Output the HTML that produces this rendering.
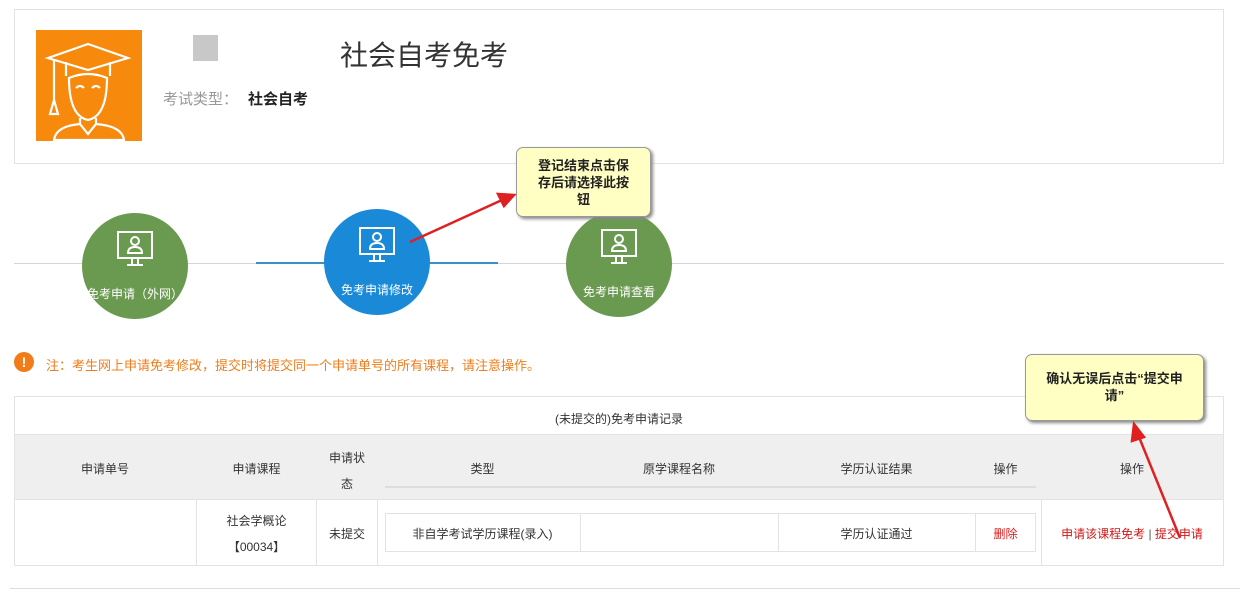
<!DOCTYPE html>
<html><head><meta charset="utf-8"><style>
*{margin:0;padding:0;box-sizing:border-box}
body{width:1245px;height:599px;background:#fff;position:relative;overflow:hidden;font-family:"Liberation Sans","Noto Sans CJK SC",sans-serif;color:#333}
.a{position:absolute}
.c{text-align:center}
.circ{position:absolute;width:106px;height:106px;border-radius:50%;color:#fff;font-size:12px;text-align:center}
.circ svg{position:absolute;left:33px;top:16px}
.circ span{position:absolute;left:-10px;right:-10px;top:72px;white-space:nowrap}
.tip{position:absolute;background:#ffffc4;border:1px solid #999;border-radius:7px;box-shadow:2px 2px 3px #888;font-size:13px;font-weight:bold;color:#222;text-align:center;line-height:17px;z-index:5}
.hd{font-size:12px;color:#333}
</style></head><body>
<div class="a" style="left:14px;top:9px;width:1210px;height:155px;border:1px solid #e3e3e3"></div>
<div class="a" style="left:36px;top:30px;width:106px;height:111px;background:#f78a0c">
<svg width="106" height="111" viewBox="0 0 106 111" fill="none" stroke="#fff" stroke-width="2.2">
<path d="M12 28 L52 14 L92 28 L52 40 Z"/><path d="M30 32 V46 M74 32 V46"/><path d="M18 30 V70 L14 84 H22 L18 70"/>
<path d="M33 48 Q33 86 52 90 Q71 86 71 48 Q52 40 33 48Z"/><path d="M40 58 q4 -4 8 0 M56 58 q4 -4 8 0"/>
<path d="M44 88 V94 L52 104 L60 94 V88"/><path d="M44 94 Q20 96 18 110 H88 Q86 96 60 94"/>
</svg></div>
<div class="a" style="left:193px;top:35px;width:25px;height:26px;background:#c8c8c8"></div>
<div class="a" style="left:340px;top:34px;font-size:28px;color:#333">社会自考免考</div>
<div class="a" style="left:163px;top:88px;font-size:15px;color:#999">考试类型：</div>
<div class="a" style="left:248px;top:88px;font-size:15px;font-weight:bold;color:#222">社会自考</div>

<div class="a" style="left:14px;top:263px;width:1210px;height:1px;background:#d5d5d5"></div>
<div class="a" style="left:256px;top:262px;width:242px;height:2px;background:#3a8fc8"></div>
<div class="circ" style="left:82px;top:213px;background:#6a9a50"><svg width="40" height="40" viewBox="0 0 40 40" fill="none" stroke="#fff" stroke-width="2"><rect x="3" y="3" width="34" height="26"/><circle cx="20" cy="12" r="4"/><path d="M13 24 q0-6 7-6 q7 0 7 6 z"/><path d="M17 29 V35 M23 29 V35 M12 36 H28"/></svg><span>免考申请（外网）</span></div>
<div class="circ" style="left:324px;top:209px;background:#1a8ad8"><svg width="40" height="40" viewBox="0 0 40 40" fill="none" stroke="#fff" stroke-width="2"><rect x="3" y="3" width="34" height="26"/><circle cx="20" cy="12" r="4"/><path d="M13 24 q0-6 7-6 q7 0 7 6 z"/><path d="M17 29 V35 M23 29 V35 M12 36 H28"/></svg><span>免考申请修改</span></div>
<div class="circ" style="left:566px;top:211px;background:#6a9a50"><svg width="40" height="40" viewBox="0 0 40 40" fill="none" stroke="#fff" stroke-width="2"><rect x="3" y="3" width="34" height="26"/><circle cx="20" cy="12" r="4"/><path d="M13 24 q0-6 7-6 q7 0 7 6 z"/><path d="M17 29 V35 M23 29 V35 M12 36 H28"/></svg><span>免考申请查看</span></div>

<div class="tip" style="left:516px;top:147px;width:135px;height:70px;padding-top:9px">登记结束点击保<br>存后请选择此按<br>钮</div>

<div class="a" style="left:14px;top:352px;width:20px;height:20px;border-radius:50%;background:#f07d1a;color:#fff;font-weight:bold;font-size:14px;text-align:center;line-height:20px">!</div>
<div class="a" style="left:46px;top:355px;font-size:13px;color:#f07d1a">注：考生网上申请免考修改，提交时将提交同一个申请单号的所有课程，请注意操作。</div>

<div class="a" style="left:14px;top:396px;width:1210px;height:170px;border:1px solid #e3e3e3"></div>
<div class="a hd c" style="left:14px;top:410px;width:1210px">(未提交的)免考申请记录</div>
<div class="a" style="left:15px;top:434px;width:1208px;height:66px;background:#efefef;border-top:1px solid #e3e3e3;border-bottom:1px solid #e3e3e3"></div>
<div class="a hd c" style="left:14px;top:460px;width:182px">申请单号</div>
<div class="a hd c" style="left:196px;top:460px;width:121px">申请课程</div>
<div class="a hd c" style="left:317px;top:445px;width:60px;line-height:26px">申请状<br>态</div>
<div class="a hd c" style="left:385px;top:460px;width:195px">类型</div>
<div class="a hd c" style="left:580px;top:460px;width:198px">原学课程名称</div>
<div class="a hd c" style="left:778px;top:460px;width:197px">学历认证结果</div>
<div class="a hd c" style="left:975px;top:460px;width:61px">操作</div>
<div class="a hd c" style="left:1041px;top:460px;width:182px">操作</div>
<div class="a" style="left:385px;top:486px;width:651px;height:2px;background:#ddd"></div>
<div class="a" style="left:196px;top:500px;width:1px;height:65px;background:#e3e3e3"></div>
<div class="a" style="left:316px;top:500px;width:1px;height:65px;background:#e3e3e3"></div>
<div class="a" style="left:377px;top:500px;width:1px;height:65px;background:#e3e3e3"></div>
<div class="a" style="left:1041px;top:500px;width:1px;height:65px;background:#e3e3e3"></div>
<div class="a hd c" style="left:196px;top:508px;width:121px;line-height:26px">社会学概论<br>【00034】</div>
<div class="a hd c" style="left:317px;top:525px;width:60px">未提交</div>
<div class="a" style="left:385px;top:513px;width:651px;height:39px;border:1px solid #e3e3e3"></div>
<div class="a" style="left:580px;top:513px;width:1px;height:39px;background:#e3e3e3"></div>
<div class="a" style="left:778px;top:513px;width:1px;height:39px;background:#e3e3e3"></div>
<div class="a" style="left:975px;top:513px;width:1px;height:39px;background:#e3e3e3"></div>
<div class="a hd c" style="left:385px;top:525px;width:195px">非自学考试学历课程(录入)</div>
<div class="a hd c" style="left:778px;top:525px;width:197px">学历认证通过</div>
<div class="a c" style="left:975px;top:525px;width:61px;font-size:12px;color:#e02020">删除</div>
<div class="a c" style="left:1041px;top:525px;width:182px;font-size:12px;color:#d01818">申请该课程免考 <span style="color:#555">|</span> 提交申请</div>

<div class="tip" style="left:1025px;top:354px;width:179px;height:67px;padding-top:15px">确认无误后点击“提交申<br>请”</div>
<svg class="a" style="left:0;top:0;z-index:10" width="1245" height="599"><g stroke="#e02020" stroke-width="2.5" fill="#e02020"><line x1="410" y1="242" x2="502" y2="200"/><polygon points="514,195 498,194 504,206" /><line x1="1180" y1="538" x2="1139" y2="437"/><polygon points="1134,424 1132,441 1144,437"/></g></svg>
<div class="a" style="left:10px;top:588px;width:1230px;height:1px;background:#ddd"></div>
</body></html>
